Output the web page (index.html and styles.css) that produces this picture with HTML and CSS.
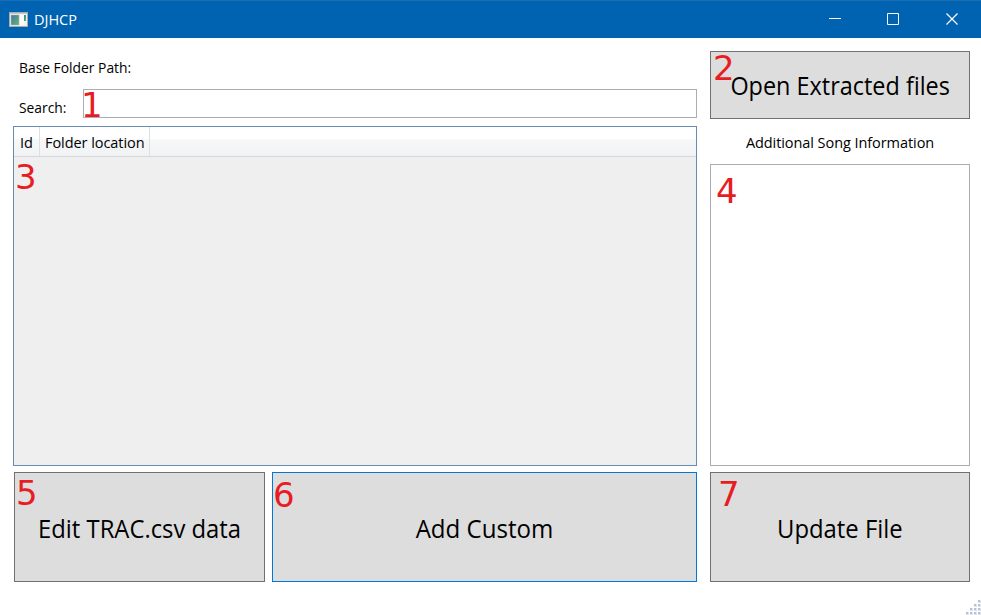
FILE: index.html
```html
<!DOCTYPE html>
<html lang="en">
<head>
<meta charset="utf-8">
<title>DJHCP</title>
<link rel="stylesheet" href="styles.css">
</head>
<body>
<div class="window">
  <header class="titlebar">
    <svg class="app-icon" width="19" height="15" viewBox="0 0 19 15">
      <defs><linearGradient id="pane" x1="0" y1="0" x2="1" y2="1"><stop offset="0" stop-color="#4577a6"/><stop offset="1" stop-color="#63b570"/></linearGradient></defs>
      <rect x=".5" y=".5" width="18" height="14" fill="#f1f1ef" stroke="#a9adb0"/>
      <rect x="1" y="1" width="17" height="1" fill="#c8cbcd"/>
      <rect x="2" y="3" width="8" height="10" fill="url(#pane)" stroke="#a6b9b6" stroke-width=".5"/>
      <rect x="11" y="3" width="4" height="10" fill="#fafafa"/>
      <rect x="15" y="3" width="2" height="6" fill="url(#pane)"/>
    </svg>
    <span class="title">DJHCP</span>
    <div class="controls">
      <svg width="58" height="36" viewBox="0 0 58 36"><path d="M17 18.5h12" stroke="#fff"/></svg>
      <svg width="58" height="36" viewBox="0 0 58 36"><path d="M17.500 13.500h11v11h-11z" fill="none" stroke="#fff"/></svg>
      <svg width="51" height="36" viewBox="0 0 51 36"><path d="M18.500 13.500l11 11M29.500 13.500l-11 11" fill="none" stroke="#fff" stroke-width="1.200"/></svg>
    </div>
  </header>
  <main class="content">
    <section class="left">
      <div class="path"><span class="t-path">Base Folder Path:</span></div>
      <div class="search">
        <span class="t-search">Search:</span>
        <div class="input"><span class="mark m1">1</span></div>
      </div>
      <div class="table">
        <div class="thead">
          <div class="th id">Id</div>
          <div class="th folder"><span class="t-folder">Folder location</span></div>
        </div>
        <span class="mark m3">3</span>
      </div>
      <div class="actions">
        <div class="button edit"><span class="t-edit">Edit TRAC.csv data</span><span class="mark m5">5</span></div>
        <div class="button add"><span class="t-add">Add Custom</span><span class="mark m6">6</span></div>
      </div>
    </section>
    <section class="right">
      <div class="button open"><span class="t-open">Open Extracted files</span><span class="mark m2">2</span></div>
      <div class="caption"><span class="t-info">Additional Song Information</span></div>
      <div class="info"><span class="mark m4">4</span></div>
      <div class="button update"><span class="t-update">Update File</span><span class="mark m7">7</span></div>
    </section>
  </main>
  <svg class="grip" width="15" height="15" viewBox="0 0 15 15">
    <g fill="#b9c0d6"><path d="M12 0h3v3h-3zM8 4h3v3h-3zM12 4h3v3h-3zM4 8h3v3h-3zM8 8h3v3h-3zM12 8h3v3h-3zM0 12h3v3h-3zM4 12h3v3h-3zM8 12h3v3h-3zM12 12h3v3h-3z" opacity=".45"/><path d="M12 0h2v2h-2zM8 4h2v2h-2zM12 4h2v2h-2zM4 8h2v2h-2zM8 8h2v2h-2zM12 8h2v2h-2zM0 12h2v2h-2zM4 12h2v2h-2zM8 12h2v2h-2zM12 12h2v2h-2z"/></g>
  </svg>
</div>
</body>
</html>
```
FILE: styles.css
```css
* { box-sizing: border-box; }
body { margin: 0; font-family: "Open Sans", "Noto Sans", sans-serif; font-size: 14.5px; color: #000; }
.window { position: relative; width: 981px; height: 615px; background: #fff; overflow: hidden; }
.titlebar { height: 38px; background: #0063b1; border-top: 1px solid #1a6fb5; display: flex; align-items: center; padding-left: 9px; color: #fff; }
.title { margin-left: 6px; font-size: 14.5px; line-height: 20px; padding-top: 1px; }
.controls { margin-left: auto; display: flex; width: 169px; height: 36px; align-self: flex-start; }
.controls svg { display: block; margin-top: -1px; }
.content { display: flex; gap: 13px; padding: 13px 11px 0 13px; }
.left { width: 684px; display: flex; flex-direction: column; }
.right { width: 260px; display: flex; flex-direction: column; }
span { white-space: nowrap; }
.path { height: 38px; padding: 6px 0 0 6px; line-height: 22px; }
.t-path, .t-search { display: inline-block; transform: scaleX(.955); transform-origin: 0 50%; }
.search { height: 29px; display: flex; padding-left: 6px; line-height: 37px; }
.input { position: relative; margin-left: auto; width: 614px; height: 29px; border: 1px solid #abadb3; }
.table { position: relative; margin-top: 8px; height: 340px; border: 1px solid #688caf; background: #efefef; }
.thead { display: flex; height: 30px; line-height: 31px; border-bottom: 1px solid #d5d7d9; background: linear-gradient(#fff 0 40%, #f7f8fa 41%, #f1f2f4); }
.th { border-right: 1px solid #dedfe1; padding-left: 6px; }
.id { width: 26px; }
.folder { width: 110px; padding-left: 5px; letter-spacing: -.06px; }
.actions { display: flex; gap: 7px; margin-top: 6px; padding-left: 1px; }
.button { position: relative; display: flex; align-items: center; justify-content: center; border: 1px solid #707070; background: #ddd; font-size: 25px; line-height: 34px; height: 110px; padding-top: 2px; }
.edit { width: 251px; }
.add { width: 425px; border-color: #0078d7; }
.open { height: 68px; padding-top: 0; }
.t-open { transform: scaleX(.937); }
.t-edit { transform: scaleX(.953); }
.t-add { transform: scaleX(.963); }
.t-update { transform: scaleX(.954); }
.caption { height: 45px; line-height: 48px; text-align: center; letter-spacing: -.07px; }
.info { position: relative; height: 302px; border: 1px solid #abadb3; }
.update { margin-top: 6px; }
.mark { position: absolute; font: 34px/34px "DejaVu Sans", sans-serif; color: #e81c23; }
.m1 { left: -3px; top: -2px; }
.m2 { left: 2px; top: -1px; }
.m3 { left: 1px; top: 33px; }
.m4 { left: 5px; top: 9px; }
.m5 { left: 1px; top: 3px; }
.m6 { left: 0; top: 5px; }
.m7 { left: 7px; top: 4px; }
.grip { position: absolute; right: 0; bottom: 0; }
```
